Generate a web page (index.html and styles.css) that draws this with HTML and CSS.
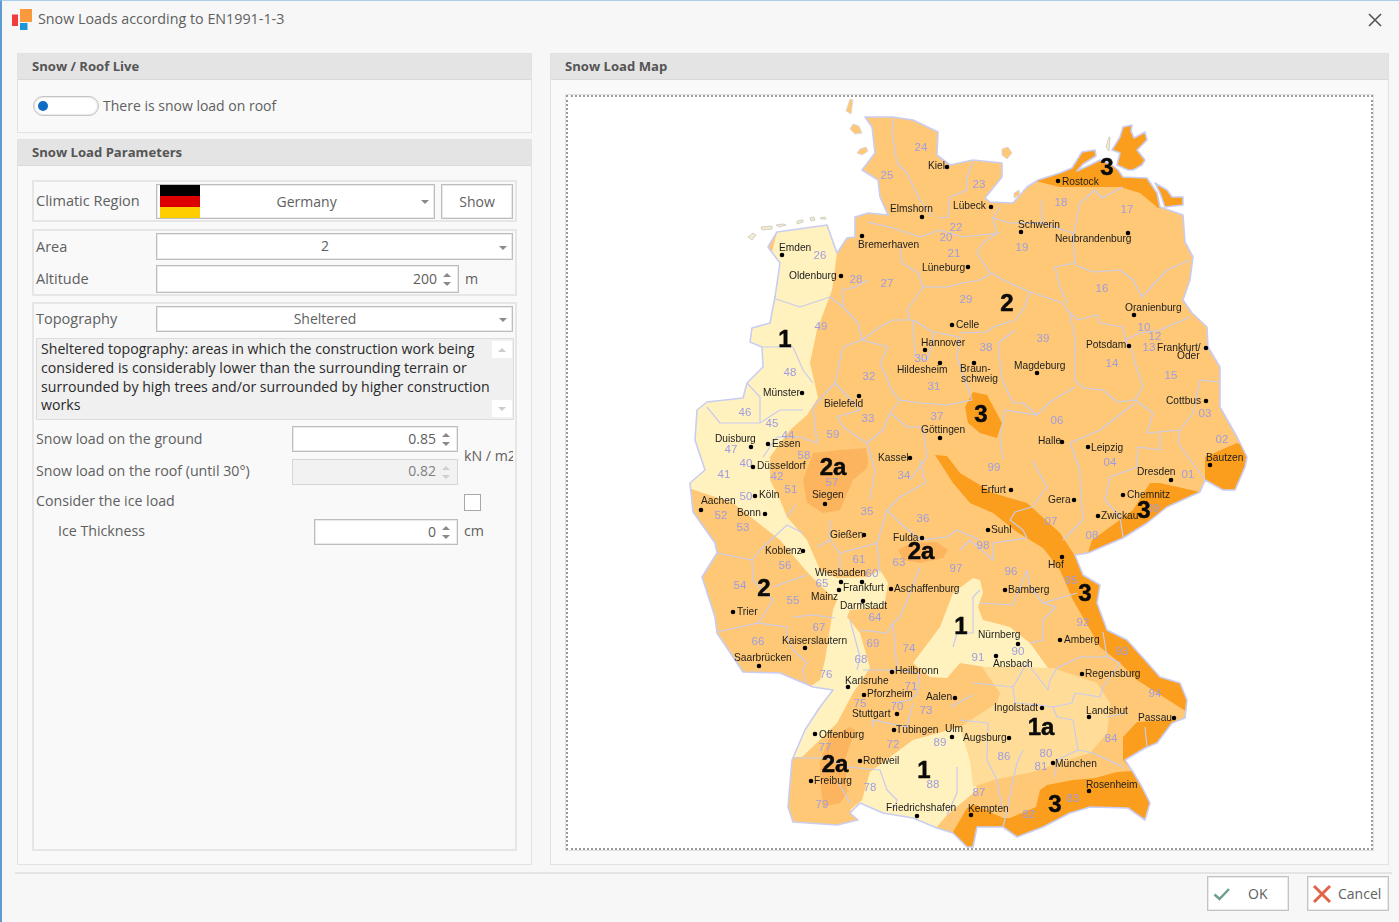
FILE: index.html
```html
<!DOCTYPE html>
<html lang="en">
<head>
<meta charset="utf-8">
<title>Snow Loads according to EN1991-1-3</title>
<link rel="stylesheet" href="styles.css">
</head>
<body>
<div class="window">
  <header class="titlebar">
    <svg class="app-icon" viewBox="0 0 20 21" width="20" height="21"><rect class="i-r" x="0" y="5.500" width="6" height="11.500"/><rect class="i-o" x="8" y="0" width="12" height="13"/><rect class="i-b" x="8" y="14" width="7.500" height="7"/></svg>
    <span class="title">Snow Loads according to EN1991-1-3</span>
    <svg class="close" viewBox="0 0 14 14" width="14" height="14"><path d="M1 1L13 13M13 1L1 13"/></svg>
  </header>
  <main class="main">
    <div class="left">
      <section class="group g-snow">
        <h2 class="head">Snow / Roof Live</h2>
        <div class="toggle-row">
          <span class="toggle"><span class="knob"></span></span>
          <span class="lbl">There is snow load on roof</span>
        </div>
      </section>
      <section class="group g-params">
        <h2 class="head">Snow Load Parameters</h2>
        <div class="params">
          <div class="box box-region">
            <span class="lbl l-col">Climatic Region</span>
            <div class="combo combo-flag">
              <span class="flag"><i class="f1"></i><i class="f2"></i><i class="f3"></i></span>
              <span class="val-c">Germany</span>
              <span class="arrow"></span>
            </div>
            <button class="btn-show">Show</button>
          </div>
          <div class="box box-area">
            <div class="row">
              <span class="lbl l-col">Area</span>
              <div class="combo combo-wide"><span class="val-c">2</span><span class="arrow"></span></div>
            </div>
            <div class="row">
              <span class="lbl l-col">Altitude</span>
              <div class="spin spin-alt"><span class="val-r">200</span><span class="sp"><i class="up"></i><i class="dn"></i></span></div>
              <span class="lbl unit">m</span>
            </div>
          </div>
          <div class="box box-topo">
            <div class="row">
              <span class="lbl l-col">Topography</span>
              <div class="combo combo-wide combo-topo"><span class="val-c">Sheltered</span><span class="arrow"></span></div>
            </div>
            <div class="memo">
              <p class="memo-text">Sheltered topography: areas in which the construction work being considered is considerably lower than the surrounding terrain or surrounded by high trees and/or surrounded by higher construction works</p>
              <div class="scroll"><span class="sb"><i class="up"></i></span><span class="sb"><i class="dn"></i></span></div>
            </div>
            <div class="loads">
              <div class="load-rows">
                <div class="row r-load">
                  <span class="lbl grow">Snow load on the ground</span>
                  <div class="spin spin-load"><span class="val-r">0.85</span><span class="sp"><i class="up"></i><i class="dn"></i></span></div>
                </div>
                <div class="row r-load">
                  <span class="lbl grow lift">Snow load on the roof (until 30°)</span>
                  <div class="spin spin-load off"><span class="val-r">0.82</span><span class="sp"><i class="up"></i><i class="dn"></i></span></div>
                </div>
              </div>
              <span class="lbl unit-kn">kN / m2</span>
            </div>
            <div class="row r-ice">
              <span class="lbl grow lift">Consider the ice load</span>
              <span class="check"></span>
            </div>
            <div class="row r-thick">
              <span class="lbl grow ind lift">Ice Thickness</span>
              <div class="spin spin-ice"><span class="val-r">0</span><span class="sp"><i class="up"></i><i class="dn"></i></span></div>
              <span class="lbl unit-cm lift">cm</span>
            </div>
          </div>
        </div>
      </section>
    </div>
    <section class="group g-map">
      <h2 class="head">Snow Load Map</h2>
      <div class="map-body">
        <div class="map-frame">
          <svg class="map" viewBox="567 96 805 753" width="805" height="753">
            <defs>
              <path id="de" d="M865 117L893 117 913 120 938 132 937 155 950 165 973 160 1002 163 1002 177 985 198 990 202 1013 203 1027 187 1038 180 1060 173 1072 168 1082 152 1095 150 1096 156 1083 164 1077 171 1090 165 1100 160 1112 165 1118 170 1123 177 1147 178 1157 193 1160 207 1183 215 1185 242 1193 257 1190 280 1183 300 1192 313 1207 327 1208 347 1220 367 1220 407 1237 437 1247 457 1245 467 1235 490 1223 490 1205 480 1200 492 1167 507 1147 523 1123 538 1088 553 1075 555 1083 575 1100 585 1097 603 1107 630 1127 640 1145 660 1160 677 1180 683 1187 700 1185 718 1172 723 1157 743 1145 748 1125 760 1133 772 1142 787 1150 803 1145 820 1128 808 1090 807 1070 813 1043 827 1017 837 1003 827 977 827 973 847 967 847 953 833 937 828 913 818 883 813 860 803 850 813 858 820 837 825 793 822 788 807 792 760 805 730 820 707 833 690 813 687 780 673 743 672 717 633 715 617 702 577 717 553 715 543 693 512 690 483 705 470 695 440 697 410 707 402 743 398 747 383 763 367 762 347 750 342 752 328 770 323 775 297 780 263 768 247 777 232 827 225 837 253 847 238 855 237 855 217 868 213 888 215 880 197 878 180 862 170 875 153 872 127Z M1120 137L1123 127 1132 125 1131 131 1134 138 1145 132 1147 140 1137 150 1145 160 1142 165 1133 170 1128 170 1117 165 1120 153 1112 150Z M1155 183L1167 190 1172 197 1183 197 1183 205 1165 207 1160 193Z"/>
              <clipPath id="de-clip"><use href="#de"/></clipPath>
            </defs>
            <path class="isl" d="M846 111l4-12 3 1-2 14zM853 124l6 2 3 7-7 1-5-5zM860 149l6-2 2 4-6 4-5-2zM1002 149l6-2 4 6-5 6-5-4zM1014 193l5-3 1 5-6 3z"/>
            <path class="isl2" d="M748 237l5-4 3 2-4 5zM761 227l11-1v3l-10 1zM776 225l7-1 3 1-7 2zM797 221l6-1v2l-6 2zM810 218l4-1 1 3-4 1zM820 218l5-1 1 2-5 0zM1106 147l3-10 1 0-1 14z"/>
            <use href="#de" class="land"/>
            <g clip-path="url(#de-clip)">
              <path class="z1" d="M777 232L827 225 837 253 832 290 817 330 810 363 818 398 807 415 790 430 770 457 770 480 780 500 787 517 807 540 820 570 837 578 867 577 880 570 888 583 884 607 850 610 847 617 860 633 870 668 853 693 837 723 825 735 802 757 780 757 790 700 820 680 825 660 833 610 837 600 825 590 808 573 780 540 733 503 680 485 680 400 760 300Z"/>
              <path class="z1" d="M913 663L940 627 953 593 973 578 980 580 983 593 978 607 983 620 1010 627 1030 643 1048 668 985 667 960 663 947 678 930 677Z"/>
              <path class="z1" d="M850 810L862 800 870 772 913 740 960 727 970 760 977 790 947 815 930 835 880 820Z"/>
              <path class="z1a" d="M982 667L1053 668 1097 683 1110 703 1107 733 1090 753 1077 757 1033 772 993 780 973 787 970 760 960 727 997 703 1000 693Z"/>
              <path class="z2a" d="M813 453L840 450 866 448 868 460 867 468 853 480 840 510 823 513 807 503 803 480Z"/>
              <path class="z2a" d="M898 550L910 543 937 542 948 550 943 558 920 563 903 560Z"/>
              <path class="z2a" d="M830 737L850 727 855 730 845 760 847 793 840 803 823 807 820 780 820 760Z"/>
              <path class="z3" d="M1035 181L1060 187 1120 187 1140 193 1158 208 1195 210 1195 115 1060 115Z"/>
              <path class="z3" d="M965 407L973 392 987 395 1002 423 997 438 980 433 968 423Z"/>
              <path class="z3" d="M935 455L947 456 960 473 993 493 1027 503 1060 533 1073 553 1085 570 1110 590 1115 630 1145 650 1170 670 1195 700 1187 712 1137 680 1120 663 1100 647 1073 600 1060 570 1043 548 1017 532 993 513 970 503 953 483Z"/>
              <path class="z3" d="M1123 760L1123 737 1137 722 1172 720 1200 722 1200 780 1140 780Z"/>
              <path class="z3" d="M953 832L967 808 975 805 1003 818 1010 818 1036 807 1040 790 1047 785 1073 780 1095 778 1117 772 1150 770 1160 830 950 860Z"/>
              <path class="z3" d="M1088 553L1092 540 1117 522 1133 510 1150 483 1160 483 1200 492 1200 510 1150 560 1080 560Z"/>
              <path class="z3" d="M1205 457L1237 443 1255 450 1250 500 1205 500Z"/>
              <path class="lines" d="M893 117L892 133 897 163 907 173 920 200 933 217M973 162L967 177 967 190 950 197 948 217 938 218M868 222L893 228 920 237 940 230 963 237 980 235 1000 233M900 247L902 263 918 273 923 287 907 310 910 320 893 320 880 327 862 340 858 323 843 307 842 290 855 287 868 280M923 287L947 287 963 283 980 280 992 273 1003 280 1030 292 1023 310 1015 320 993 327 987 332 960 333M1030 292L1063 303 1067 310 1070 313 1078 320 1097 315 1100 323 1123 327 1125 340 1140 333 1160 330 1190 317M1067 303L1060 287 1055 267 1075 263 1073 237 1080 203 1095 190 1102 198 1123 187M1075 265L1093 272 1120 270 1133 280 1142 297 1167 270 1190 260M1042 200L1042 223 1073 233M1000 207L993 218 1010 223 1042 223M993 218L997 233 983 243 977 253 990 273M1070 313L1075 340 1075 380 1083 388 1103 390 1117 402 1135 400 1143 387 1135 363 1133 353 1125 340M1002 380L998 343 1015 330M1002 380L1013 403 1023 403 1037 415 1050 402 1075 387M1135 400L1153 413 1147 433 1180 430 1193 413 1200 380 1220 382M1160 433L1160 450 1138 447 1137 467 1110 477 1105 500 1120 517 1123 537M1180 430L1178 443 1205 480M1070 443L1100 430 1135 403M1070 443L1080 470 1080 480 1083 520 1063 540M1037 415L1005 410 1000 437 1003 460M1032 460L1047 487 1032 507 1015 512 1010 520 1023 530 1027 538 993 543 993 560 970 540 960 550M1027 570L1030 587 1043 603 1077 593M1043 603L1056 607 1043 620 1043 640 1030 643M980 603L1013 605 1027 570M1103 632L1107 657 1080 657 1057 668 1050 680 1048 690 1038 677 1027 663 1013 687M1107 657L1120 663 1103 687 1100 697 1075 693 1072 703 1053 707 1057 717 1073 720 1078 750 1057 760 1055 777M1127 713L1107 717M1145 727L1147 747M1023 750L1017 763 1013 780 1008 807 1003 827M1078 750L1093 753 1123 767M960 720L988 723 987 760 997 780 1002 807M973 683L1013 687 1015 703 1040 705 1053 707M717 553L752 560 760 550 787 525 803 533M752 560L753 580 773 600 758 623 787 627 787 637 793 650 807 663 803 668 805 683M717 632L758 623M773 587L807 575M793 617L813 615 835 618M850 620L860 657 857 670M787 517L795 505M830 520L830 540 817 547M830 540L840 553 840 573M840 553L877 543 880 573M877 543L887 510 900 497 925 483 920 460M887 510L900 523 920 540 947 537 957 530 980 540M920 567L910 593 900 617 893 623 897 670M860 630L887 633 893 623M863 670L897 670 920 673 917 693 910 700 894 703M873 727L873 720 907 727 913 703M950 707L973 695M847 767L880 770 887 790 897 800 893 810M793 758L827 758 847 767M837 780L850 803M957 767L957 793 947 815M953 647L957 633 973 633 973 597 980 590M773 298L800 307 830 297 843 307M762 347L793 347 803 370 813 383M747 383L760 397 760 423 780 410 803 410M707 407L720 423 760 423M763 457L777 437 800 437 817 443 813 407 835 383 860 410 837 417M835 383L843 347 853 343 862 340 888 347 880 363 893 393 900 400 890 413 883 430 867 443M913 320L915 357 927 360 933 343 933 332 913 320M933 332L960 337 957 357 972 400 947 405 920 403 900 400M890 413L907 427 923 427 927 457 910 480M837 417L843 427 867 443 875 470 870 500"/>
            </g>
            <use href="#de" class="coast"/>
            <g class="n">
              <text x="921" y="151">24</text><text x="887" y="179">25</text><text x="820" y="259">26</text><text x="856" y="283">28</text><text x="887" y="287">27</text><text x="956" y="231">22</text><text x="946" y="241">20</text><text x="954" y="257">21</text><text x="966" y="303">29</text><text x="821" y="330">49</text><text x="790" y="376">48</text><text x="921" y="362">30</text><text x="869" y="380">32</text><text x="934" y="390">31</text><text x="745" y="416">46</text><text x="772" y="427">45</text><text x="788" y="439">44</text><text x="731" y="453">47</text><text x="868" y="422">33</text><text x="937" y="420">37</text><text x="833" y="438">59</text><text x="804" y="459">58</text><text x="746" y="467">40</text>
              <text x="979" y="188">23</text><text x="1061" y="206">18</text><text x="1127" y="213">17</text><text x="1022" y="251">19</text><text x="1102" y="292">16</text><text x="1144" y="331">10</text><text x="1155" y="340">12</text><text x="1149" y="351">13</text><text x="1043" y="342">39</text><text x="986" y="351">38</text><text x="1112" y="367">14</text><text x="1171" y="379">15</text><text x="1205" y="417">03</text><text x="1057" y="424">06</text><text x="1222" y="443">02</text><text x="1110" y="466">04</text><text x="994" y="471">99</text>
              <text x="724" y="478">41</text><text x="777" y="480">42</text><text x="832" y="486">57</text><text x="904" y="479">34</text><text x="791" y="493">51</text><text x="746" y="500">50</text><text x="721" y="519">52</text><text x="743" y="531">53</text><text x="867" y="515">35</text><text x="923" y="522">36</text><text x="785" y="569">56</text><text x="859" y="563">61</text><text x="899" y="566">63</text><text x="956" y="572">97</text><text x="872" y="577">60</text><text x="822" y="587">65</text><text x="740" y="589">54</text><text x="793" y="604">55</text><text x="819" y="631">67</text><text x="875" y="621">64</text><text x="873" y="647">69</text><text x="909" y="652">74</text><text x="758" y="645">66</text><text x="861" y="663">68</text><text x="826" y="678">76</text><text x="911" y="690">71</text><text x="860" y="707">75</text><text x="897" y="710">70</text><text x="926" y="714">73</text><text x="940" y="746">89</text><text x="825" y="751">77</text><text x="893" y="748">72</text><text x="870" y="791">78</text><text x="933" y="788">88</text><text x="822" y="808">79</text>
              <text x="983" y="549">98</text><text x="1011" y="575">96</text><text x="1188" y="478">01</text><text x="1051" y="525">07</text><text x="1092" y="539">08</text><text x="1153" y="512">09</text><text x="1071" y="584">95</text><text x="1083" y="626">92</text><text x="1122" y="655">93</text><text x="1155" y="697">94</text><text x="978" y="661">91</text><text x="1018" y="655">90</text><text x="1111" y="742">84</text><text x="1004" y="760">86</text><text x="1046" y="757">80</text><text x="1041" y="770">81</text><text x="1073" y="802">83</text><text x="979" y="796">87</text><text x="1029" y="818">82</text>
            </g>
            <path class="dots" d="M947 167h0M922 217h0M991 207h0M862 236h0M782 255h0M841 276h0M968 267h0M952 325h0M925 350h0M940 363h0M974 363h0M802 393h0M859 396h0M940 438h0M751 447h0M768 444h0M753 467h0M910 458h0M1058 181h0M1021 232h0M1128 233h0M1134 315h0M1129 346h0M1206 348h0M1037 373h0M1206 401h0M1062 442h0M1088 447h0M1210 465h0M1171 480h0M1011 490h0M1074 500h0M1123 495h0M1098 516h0M988 530h0M1062 557h0M1005 590h0M1060 640h0M1018 644h0M996 656h0M1082 674h0M1089 717h0M1174 718h0M1042 708h0M1009 738h0M1053 763h0M1089 791h0M971 815h0M755 496h0M701 510h0M765 514h0M825 504h0M864 535h0M922 538h0M803 551h0M841 582h0M862 582h0M839 590h0M891 589h0M863 601h0M733 612h0M805 648h0M759 666h0M892 672h0M848 687h0M864 695h0M955 698h0M897 714h0M894 730h0M952 737h0M815 734h0M860 761h0M811 781h0M917 816h0"/>
            <g class="c">
              <text x="928" y="169">Kiel</text><text x="890" y="212">Elmshorn</text><text x="953" y="209">Lübeck</text><text x="858" y="248">Bremerhaven</text><text x="779" y="251">Emden</text><text x="789" y="279">Oldenburg</text><text x="922" y="271">Lüneburg</text><text x="956" y="328">Celle</text><text x="921" y="346">Hannover</text><text x="897" y="373">Hildesheim</text><text x="960" y="372">Braun-</text><text x="961" y="382">schweig</text><text x="763" y="396">Münster</text><text x="824" y="407">Bielefeld</text><text x="921" y="433">Göttingen</text><text x="715" y="442">Duisburg</text><text x="772" y="447">Essen</text><text x="757" y="469">Düsseldorf</text><text x="878" y="461">Kassel</text>
              <text x="1062" y="185">Rostock</text><text x="1018" y="228">Schwerin</text><text x="1055" y="242">Neubrandenburg</text><text x="1125" y="311">Oranienburg</text><text x="1086" y="348">Potsdam</text><text x="1157" y="351">Frankfurt/</text><text x="1177" y="359">Oder</text><text x="1014" y="369">Magdeburg</text><text x="1166" y="404">Cottbus</text><text x="1038" y="444">Halle</text><text x="1091" y="451">Leipzig</text><text x="1206" y="461">Bautzen</text>
              <text x="1137" y="475">Dresden</text><text x="981" y="493">Erfurt</text><text x="1048" y="503">Gera</text><text x="1127" y="498">Chemnitz</text><text x="1101" y="519">Zwickau</text><text x="991" y="533">Suhl</text><text x="1048" y="568">Hof</text><text x="1008" y="593">Bamberg</text><text x="1064" y="643">Amberg</text><text x="978" y="638">Nürnberg</text><text x="993" y="667">Ansbach</text><text x="1085" y="677">Regensburg</text><text x="1086" y="714">Landshut</text><text x="1138" y="721">Passau</text><text x="994" y="711">Ingolstadt</text><text x="963" y="741">Augsburg</text><text x="1055" y="767">München</text><text x="1086" y="788">Rosenheim</text><text x="968" y="812">Kempten</text>
              <text x="759" y="498">Köln</text><text x="701" y="504">Aachen</text><text x="737" y="516">Bonn</text><text x="812" y="498">Siegen</text><text x="830" y="538">Gießen</text><text x="893" y="541">Fulda</text><text x="765" y="554">Koblenz</text><text x="815" y="576">Wiesbaden</text><text x="843" y="591">Frankfurt</text><text x="894" y="592">Aschaffenburg</text><text x="811" y="600">Mainz</text><text x="840" y="609">Darmstadt</text><text x="737" y="615">Trier</text><text x="782" y="644">Kaiserslautern</text><text x="734" y="661">Saarbrücken</text><text x="895" y="674">Heilbronn</text><text x="845" y="684">Karlsruhe</text><text x="867" y="697">Pforzheim</text><text x="926" y="700">Aalen</text><text x="852" y="717">Stuttgart</text><text x="896" y="733">Tübingen</text><text x="945" y="732">Ulm</text><text x="819" y="738">Offenburg</text><text x="863" y="764">Rottweil</text><text x="814" y="784">Freiburg</text><text x="886" y="811">Friedrichshafen</text>
            </g>
            <g class="z">
              <text x="1107" y="175">3</text><text x="1007" y="311">2</text><text x="785" y="347">1</text><text x="981" y="422">3</text><text x="833" y="475">2a</text><text x="1144" y="518">3</text><text x="921" y="559">2a</text><text x="1085" y="601">3</text><text x="764" y="596">2</text><text x="961" y="634">1</text><text x="924" y="778">1</text><text x="1041" y="735">1a</text><text x="835" y="772">2a</text><text x="1055" y="812">3</text>
            </g>
          </svg>
        </div>
      </div>
    </section>
  </main>
  <footer class="footer">
    <button class="btn-ok">
      <svg viewBox="0 0 18 14" width="18" height="14"><path class="ok-mark" d="M1.500 7.500L6.500 12 16 2"/></svg>
      <span>OK</span>
    </button>
    <button class="btn-cancel">
      <svg viewBox="0 0 20 20" width="20" height="20"><path class="x-mark" d="M2 2L18 18M18 2L2 18"/></svg>
      <span>Cancel</span>
    </button>
  </footer>
</div>
</body>
</html>
```

FILE: styles.css
```css
* { box-sizing: border-box; }
html, body { margin: 0; padding: 0; }
body { width: 1399px; height: 922px; overflow: hidden; background: #f7f7f7; }

.window {
  width: 1399px; height: 922px;
  display: flex; flex-direction: column;
  background: #f7f7f7;
  border-top: 1px solid #a9cfee;
  border-left: 2px solid #5d9bd0;
  font-family: "Open Sans", "Noto Sans", sans-serif;
  font-size: 14px;
  color: #5e5e5e;
}

.titlebar { height: 52px; flex: none; display: flex; align-items: flex-start; padding: 8px 17px 0 10px; }
.app-icon { flex: none; margin-right: 6px; }
.i-r { fill: #f03c3c; }
.i-o { fill: #fb9a3c; }
.i-b { fill: #1f95d8; }
.title { font-size: 14.300px; line-height: 20px; color: #606060; flex: 1; }
.close { margin-top: 4px; fill: none; }
.close path { stroke: #555; stroke-width: 1.600; }

.main { flex: none; height: 812px; display: flex; gap: 18px; padding-left: 15px; }
.left { width: 515px; flex: none; display: flex; flex-direction: column; gap: 6px; }

.group { border: 1px solid #e2e2e2; background: #f9f9f9; display: flex; flex-direction: column; }
.head {
  margin: 0; height: 26px; flex: none;
  background: #e4e4e4; border-bottom: 1px solid #d9d9d9;
  padding-left: 14px;
  font-size: 13.100px; font-weight: 700; line-height: 25px; color: #555;
}

.g-snow { height: 80px; flex: none; }
.toggle-row { display: flex; align-items: center; padding: 16px 0 0 15px; gap: 4px; }
.toggle { width: 66px; height: 20px; flex: none; border: 1px solid #c4c4c4; border-radius: 10px; background: #fff; display: flex; align-items: center; padding-left: 4px; box-shadow: inset 0 0 2px #bbb; }
.knob { width: 10px; height: 10px; border-radius: 50%; background: #0f6cc4; }
.lbl { line-height: 20px; color: #606060; white-space: nowrap; font-size: 14.200px; }
.toggle-row .lbl { font-size: 14px; }
.lift { padding-bottom: 2px; }

.g-params { flex: 1; }
.params { flex: 1; padding: 14px 14px 13px 14px; display: flex; flex-direction: column; gap: 7px; }
.box { border: 2px solid #e6e6e6; padding: 2px; }
.l-col { width: 120px; flex: none; font-size: 14.500px; }
.box-region { height: 42px; display: flex; align-items: center; }
.combo, .spin { background: #fff; border: 1px solid #bdbdbd; display: flex; align-items: center; position: relative; box-shadow: inset 0 0 0 1px #e9e9e9; }
.combo-flag { width: 280px; height: 35px; padding-left: 3px; }
.flag { width: 40px; height: 33px; display: flex; flex-direction: column; flex: none; }
.flag i { flex: 1; }
.f1 { background: #000; }
.f2 { background: #dd0000; }
.f3 { background: #ffce00; }
.val-c { flex: 1; text-align: center; color: #606060; }
.arrow { width: 0; height: 0; border-left: 4px solid transparent; border-right: 4px solid transparent; border-top: 4px solid #8a8a8a; margin: 2px 5px 0 6px; flex: none; }
.combo-flag .val-c { padding-right: 2px; }
.combo-wide .val-c { padding-bottom: 2px; }
.btn-show { width: 72px; height: 35px; margin-left: 6px; background: #fff; border: 1px solid #bdbdbd; box-shadow: inset 0 0 0 1px #e9e9e9; font: inherit; color: #606060; padding: 0; }

.box-area { height: 67px; display: flex; flex-direction: column; gap: 5px; padding-bottom: 0; }
.row { display: flex; align-items: center; }
.combo-wide { width: 358px; height: 27px; }
.spin { height: 28px; justify-content: flex-end; }
.spin-alt { width: 303px; }
.unit { margin-left: 6px; }
.val-r { color: #606060; padding-bottom: 2px; margin-right: -1px; }
.off .val-r { padding-bottom: 3px; }
.sp { width: 22px; flex: none; height: 100%; display: flex; flex-direction: column; align-items: center; justify-content: center; gap: 5px; }
.up, .dn { display: block; width: 0; height: 0; border-left: 4px solid transparent; border-right: 4px solid transparent; }
.up { border-bottom: 4px solid #8a8a8a; }
.dn { border-top: 4px solid #8a8a8a; }

.box-topo { flex: 1; display: flex; flex-direction: column; margin-top: -1px; }
.combo-topo { height: 26px; }
.memo { margin-top: 6px; height: 82px; width: 478px; background: #f0f0f0; border: 1px solid #dcdcdc; display: flex; }
.memo-text { margin: 0; padding: 1px 0 0 4px; flex: 1; font-size: 14.150px; line-height: 18.800px; color: #2a2a2a; }
.scroll { width: 20px; margin-right: 1px; flex: none; display: flex; flex-direction: column; justify-content: space-between; padding: 2px 0; }
.sb { height: 17px; background: #fff; display: flex; align-items: center; justify-content: center; }
.sb .up { border-bottom-color: #ccc; }
.sb .dn { border-top-color: #ccc; }

.loads { display: flex; align-items: center; margin-top: 6px; height: 59px; }
.load-rows { display: flex; flex-direction: column; gap: 7px; width: 422px; flex: none; }
.r-load { height: 26px; }
.grow { flex: 1; }
.spin-load { width: 166px; height: 26px; }
.off { background: #f2f2f2; border-color: #d6d6d6; box-shadow: none; }
.off .val-r { color: #808080; }
.off .up { border-bottom-color: #cfcfcf; }
.off .dn { border-top-color: #cfcfcf; }
.unit-kn { width: 50px; margin-left: 6px; overflow: hidden; }
.r-ice { margin-top: 8px; height: 18px; padding-right: 32px; }
.check { width: 17px; height: 17px; background: #fff; border: 1px solid #a8a8a8; flex: none; }
.r-thick { margin-top: 8px; }
.ind { padding-left: 22px; }
.spin-ice { width: 144px; height: 26px; }
.unit-cm { width: 49px; margin-left: 6px; flex: none; }

.g-map { width: 839px; flex: none; }
.map-body { flex: 1; padding: 15px; }
.map-frame { width: 807px; height: 755px; border: 2px dotted #9a9a9a; background: #fff; outline: 1px solid #e2e2e2; }
.map { display: block; margin: -1px; filter: blur(0.35px); }

.isl { fill: #fec877; stroke: #d5d5e8; stroke-width: .8; }
.isl2 { fill: #f3ecd0; stroke: #c9c7bb; stroke-width: .8; }
.land { fill: #fec877; }
.coast { fill: none; stroke: #c9cdf2; stroke-width: 1.600; stroke-linejoin: round; }
.z1 { fill: #fff2bf; }
.z1a { fill: #ffdd98; }
.z2a { fill: #fdb45f; }
.z3 { fill: #fb9e1e; }
.lines { fill: none; stroke: #c8cbee; stroke-width: 1.200; stroke-linejoin: round; }
.n text { font: 11.500px "Liberation Sans", sans-serif; fill: #9f9de0; text-anchor: middle; }
.c text { font: 10.200px "Liberation Sans", sans-serif; fill: #1c1c1c; }
.z text { font: 700 24px "Liberation Sans", sans-serif; fill: #0a0a0a; text-anchor: middle; stroke: #0a0a0a; stroke-width: .5; }
.dots { fill: none; stroke: #000; stroke-width: 4.600; stroke-linecap: round; }

.footer { flex: none; height: 48px; margin: 7px 7px 0 13px; border-top: 2px solid #e4e4e4; display: flex; justify-content: flex-end; gap: 18px; padding: 2px 3px 0 0; }
.btn-ok, .btn-cancel { height: 35px; background: #fff; border: 1px solid #c4c4c4; box-shadow: inset 0 0 0 1px #e9e9e9; font: inherit; color: #606060; display: flex; align-items: center; padding: 0; }
.btn-ok { width: 82px; padding-left: 5px; gap: 17px; }
.btn-cancel { width: 82px; padding-left: 4px; gap: 6px; }
.ok-mark { fill: none; stroke: #6fa08b; stroke-width: 2.500; }
.x-mark { fill: none; stroke: #e0634a; stroke-width: 3; }
```
